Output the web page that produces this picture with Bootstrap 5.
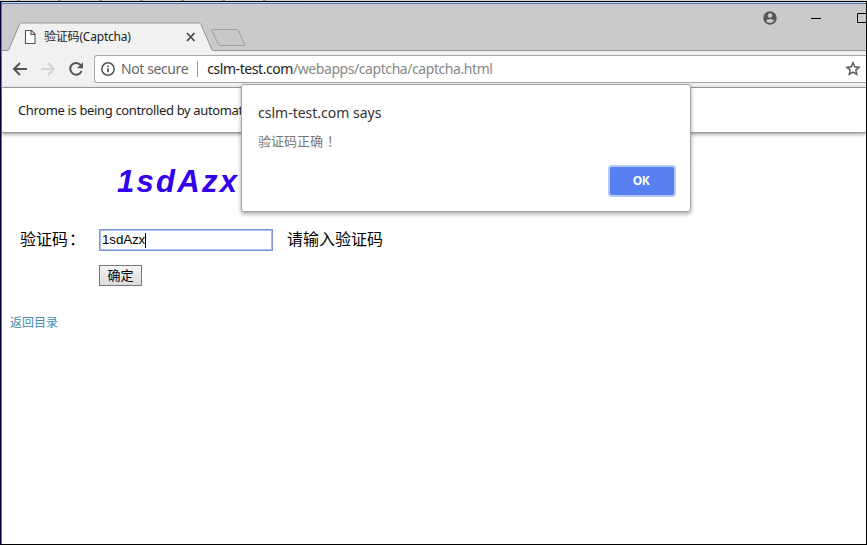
<!DOCTYPE html>
<html lang="zh-CN">
<head>
<meta charset="utf-8">
<title>验证码(Captcha)</title>
<link href="https://cdn.jsdelivr.net/npm/bootstrap@5.3.0/dist/css/bootstrap.min.css" rel="stylesheet">
<style>
body{font-family:"Noto Sans","Noto Sans CJK SC",sans-serif;color:#222;width:867px;height:545px}
.desk{height:1px;background:linear-gradient(90deg,transparent 300px,#d3dedb 300px),repeating-linear-gradient(90deg,#cfdad8 0 17px,#8b9490 17px 20px,#cfdad8 20px 41px)}
.win{height:544px;border:1px solid #000;border-left-color:#000038;background:#fff}
.win-in{border-left:1px solid #4d86a8;height:542px}
.edge{height:2px;background:#c9d6e4;border-bottom:1px solid #4a7fb5}
.titlebar{height:48px;background:#cacaca}
.tabs-svg{width:260px;height:48px}
.tab-label{left:42px;top:24px;font-size:12px;line-height:18px;white-space:nowrap;letter-spacing:-.2px}
.strip-line{left:260px}
.toolbar{height:36px;background:#f1f1f1;padding:0 0 1px 9px;border-bottom:1px solid #aaa}
.omni{height:28px;border:1px solid #a8a8a8;border-right:0;border-radius:3px 0 0 3px;margin-left:10px;padding:0 5px;font-size:14px;line-height:26px}
.notsec{color:#666;margin-left:5px;letter-spacing:-.4px}
.url{color:#888;letter-spacing:-.43px}
.host{color:#222}
.sep{width:1px;height:16px;background:#999;margin:0 9px}
.infobar{height:45px;padding:2px 0 0 16px;font-size:13px;letter-spacing:-.36px;border-bottom:1px solid #999;box-shadow:0 1px 4px rgba(0,0,0,.45)}
.code{font:italic bold 31px/36px "Liberation Sans",Arial,sans-serif;letter-spacing:2.3px;color:#30e;margin:31px 0 0 115px}
.form-line{font:16px/22px "Noto Sans CJK SC",sans-serif;color:#000;margin:29px 0 0 18px}
.cjk-up{position:relative;top:-2px}
.lbl{width:79px}
.colon{margin-left:1px}
.hint{margin-left:14px}
.field{width:174px;height:22px;border:1px solid #7b97dc;outline:1px solid #a9bdec;outline-offset:-2px;background:#fff;padding:0 0 0 2px;font:13.33px/20px "Liberation Sans",Arial,sans-serif}
.typed{letter-spacing:-.1px}
.caret{width:1px;height:15px;background:#000}
.submit{width:43px;height:21px;border:1px solid #777;border-radius:0;background:linear-gradient(#f4f4f4,#dcdcdc);font:13px/17px "Noto Sans CJK SC",sans-serif;color:#000;padding:0 0 2px;margin:14px 0 0 97px}
.back{font:12px/18px "Noto Sans CJK SC",sans-serif;color:#428bad;margin:27px 0 0 8px}
.alert-win{left:241px;top:84px;width:450px;height:128px;background:#fff;border:1px solid #a5a5a5;border-radius:3px;box-shadow:0 2px 4px rgba(0,0,0,.35);padding:18px 15px 0 16px}
.alert-title{font-size:14px;line-height:20px;color:#333}
.alert-msg{font:13px/18px "Noto Sans CJK SC",sans-serif;color:#777;margin-top:9px}
.bang{margin-left:4px}
.ok{width:64px;height:28px;background:#567ff0;border:0;border-radius:2px;box-shadow:0 0 0 2px #b6c8f8;color:#fff;font:bold 12px/28px "Noto Sans",sans-serif;letter-spacing:-.4px;padding:0 2px 0 0;margin:17px 1px 0 0}
</style>
<script src="https://cdn.jsdelivr.net/npm/bootstrap@5.3.0/dist/js/bootstrap.bundle.min.js"></script>
</head>
<body class="m-0 overflow-hidden position-relative">
<div class="desk"></div>
<div class="win"><div class="win-in d-flex flex-column">
  <div class="edge flex-shrink-0"></div>
  <div class="titlebar d-flex justify-content-between position-relative flex-shrink-0">
    <!-- tab outline, page icon, close mark and new-tab shape -->
    <svg class="tabs-svg flex-shrink-0" viewBox="2 4 260 48">
      <path d="M2 50.500H866" stroke="#969696"/><rect x="2" y="51" width="260" height="1" fill="#f1f1f1"/>
      <path d="M7 50.500q1.500 0 2-1.500L19.500 24.500q.7-1.500 2-1.500H199q1.500 0 2 1.500L211.500 49q.6 1.500 2 1.500V52H7z" fill="#f1f1f1"/>
      <path d="M7 50.500q1.500 0 2-1.500L19.500 24.500q.7-1.500 2-1.500H199q1.500 0 2 1.500L211.500 49q.6 1.500 2 1.500" fill="none" stroke="#969696"/>
      <path d="M212.500 29.500h24q1.500 0 2 1.500l6 13q.6 1.500-1 1.500h-23q-1.500 0-2.200-1.500l-6.300-13q-.6-1.500.5-1.500z" fill="#c8c8c8" stroke="#9c9c9c"/>
      <path d="M25.500 30.500h6l3.500 3.500v9.500h-9.500zM31 30.500v4h4" fill="#fff" stroke="#555" stroke-width="1.100"/>
      <path d="M187 33l7.500 8M194.500 33l-7.500 8" stroke="#444" stroke-width="1.700"/>
    </svg>
    <div class="tab-label position-absolute">验证码(Captcha)</div>
    <svg class="flex-shrink-0" width="110" height="48" viewBox="756 4 110 48">
      <circle cx="770" cy="18" r="6.700" fill="#555"/><circle cx="770" cy="15.500" r="2.200" fill="#cacaca"/><path d="M765.800 20.500q4.200-3.200 8.400 0q-1.500 2.500-4.200 2.500t-4.200-2.500z" fill="#cacaca"/>
      <path d="M811 18.500h10M866 13.500h-8.500v9h8.500" stroke="#000" fill="none"/>
      <path d="M756 50.500h110" stroke="#969696"/><rect x="756" y="51" width="110" height="1" fill="#f1f1f1"/>
    </svg>
    <svg class="strip-line position-absolute bottom-0" width="495" height="2"><path d="M0 .5h495" stroke="#969696"/><path d="M0 1.500h495" stroke="#f1f1f1"/></svg>
  </div>
  <div class="toolbar d-flex align-items-center flex-shrink-0">
    <svg width="73" height="20" viewBox="11 59 73 20" fill="none" stroke-width="2">
      <path d="M27 69H14.500M20 63l-6 6 6 6" stroke="#555"/>
      <path d="M41 69h12.500M48 63l6 6-6 6" stroke="#d4d4d4"/>
      <path d="M81 65.500a5.900 5.900 0 1 0 .6 5.500" stroke="#555"/><path d="M83 62.300v6h-6z" fill="#555"/>
    </svg>
    <div class="omni bg-white flex-grow-1 d-flex align-items-center">
      <svg width="16" height="16" viewBox="0 0 16 16"><circle cx="8" cy="8" r="6.200" fill="none" stroke="#555" stroke-width="1.500"/><path d="M8 7.200v4M8 4.500v1.600" stroke="#555" stroke-width="1.700"/></svg>
      <span class="notsec">Not secure</span><span class="sep"></span>
      <span class="url"><span class="host">cslm-test.com</span>/webapps/captcha/captcha.html</span>
      <svg class="ms-auto" width="16" height="16" viewBox="0 0 16 16"><path d="M8 1.800l1.700 4 4.400.4-3.300 2.900 1 4.300L8 11.100l-3.800 2.300 1-4.300-3.300-2.900 4.400-.4z" fill="none" stroke="#555" stroke-width="1.400"/></svg>
    </div>
  </div>
  <div class="infobar d-flex align-items-center flex-shrink-0">Chrome is being controlled by automat</div>
  <main>
    <div class="code">1sdAzx</div>
    <div class="form-line d-flex align-items-center">
      <span class="lbl cjk-up">验证码<span class="colon">：</span></span>
      <div class="field d-flex align-items-center"><span class="typed">1sdAzx</span><span class="caret"></span></div>
      <span class="hint cjk-up">请输入验证码</span>
    </div>
    <button class="submit d-block">确定</button>
    <a class="back d-block text-decoration-none" href="#">返回目录</a>
  </main>
</div></div>
<div class="alert-win position-absolute">
  <div class="alert-title">cslm-test.com says</div>
  <div class="alert-msg">验证码正确<span class="bang">！</span></div>
  <div class="d-flex justify-content-end"><button class="ok">OK</button></div>
</div>
</body>
</html>
